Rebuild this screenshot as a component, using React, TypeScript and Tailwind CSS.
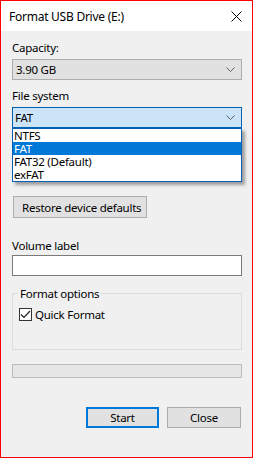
import { useState } from 'react';

const fileSystems = ['NTFS', 'FAT', 'FAT32 (Default)', 'exFAT'];

function Chevron() {
  return (
    <svg width="9" height="5" viewBox="0 0 9 5" className="shrink-0">
      <path d="M0.5 0.5 L4.5 4.5 L8.5 0.5" fill="none" stroke="#5f5f5f" strokeWidth="1" />
    </svg>
  );
}

export default function App() {
  const [selected] = useState('FAT');
  const [quick, setQuick] = useState(true);

  return (
    <div
      className="w-[253px] h-[458px] border border-[#ff0000] bg-[#f0f0f0] flex flex-col text-[11.5px] leading-[15px] tracking-[-0.25px] text-black overflow-hidden"
      style={{ fontFamily: '"Noto Sans", "Open Sans", sans-serif' }}
    >
      {/* title bar */}
      <div className="h-[30px] bg-white flex items-center justify-between pl-[8px] pr-[10px] shrink-0">
        <span className="pt-[1px] text-[12px]">Format USB Drive (E:)</span>
        <svg width="11" height="11" viewBox="0 0 11 11">
          <path d="M0.5 0.5 L10.5 10.5 M10.5 0.5 L0.5 10.5" stroke="#000" strokeWidth="1" />
        </svg>
      </div>

      <div className="flex flex-col pl-[11px] pr-[10px]">
        <label className="mt-[9px]">Capacity:</label>
        <div className="mt-[4px] h-[21px] w-[230px] border border-[#adadad] bg-[#e1e1e1] flex items-center justify-between pl-[3px] pr-[6px]">
          <span>3.90 GB</span>
          <Chevron />
        </div>

        <label className="mt-[8px]">File system</label>
        <div className="relative mt-[4px] w-[230px]">
          <div className="h-[21px] border border-[#0063b1] bg-[#cce4f7] flex items-center justify-between pl-[2px] pr-[6px]">
            <span>{selected}</span>
            <Chevron />
          </div>
          <ul className="absolute left-0 top-[21px] w-[230px] border border-[#0a5fb4] bg-white z-10 shadow-[3px_3px_3px_rgba(0,0,0,0.35)]">
            {fileSystems.map((fs) => (
              <li
                key={fs}
                className={
                  fs === selected
                    ? 'h-[13px] leading-[13px] pl-[1px] bg-[#0078d7] text-white'
                    : 'h-[13px] leading-[13px] pl-[1px]'
                }
              >
                {fs}
              </li>
            ))}
          </ul>
        </div>

        <button
          type="button"
          className="mt-[68px] self-start h-[22px] w-[134px] ml-[1px] border border-[#adadad] bg-[#e1e1e1] text-left pl-[8px] whitespace-nowrap"
        >
          Restore device defaults
        </button>

        <label className="mt-[20px]">Volume label</label>
        <input
          type="text"
          className="mt-[2px] h-[21px] w-[230px] border border-[#7a7a7a] bg-white outline-none px-[3px]"
        />

        <fieldset className="mt-[10px] h-[64px] w-[230px] border border-[#dcdcdc] pl-[5px]">
          <legend className="px-[2px]">Format options</legend>
          <label className="mt-[6px] flex items-center gap-[3px] pl-[1px]">
            <span
              onClick={() => setQuick(!quick)}
              className="w-[13px] h-[13px] border border-[#333] bg-white flex items-center justify-center"
            >
              {quick && (
                <svg width="11" height="9" viewBox="0 0 11 9">
                  <path d="M1 4.5 L4 7.5 L10 1" fill="none" stroke="#222" strokeWidth="1.2" />
                </svg>
              )}
            </span>
            <span>Quick Format</span>
          </label>
        </fieldset>

        <div className="mt-[14px] h-[14px] w-[230px] border border-[#bcbcbc] bg-[#e6e6e6]" />
      </div>

      <div className="mt-[29px] flex justify-end gap-[8px] pr-[11px]">
        <button
          type="button"
          className="h-[21px] w-[73px] border-2 border-[#0078d7] bg-[#e1e1e1] text-center"
        >
          Start
        </button>
        <button
          type="button"
          className="h-[21px] w-[74px] border border-[#adadad] bg-[#e1e1e1] text-center"
        >
          Close
        </button>
      </div>
    </div>
  );
}
